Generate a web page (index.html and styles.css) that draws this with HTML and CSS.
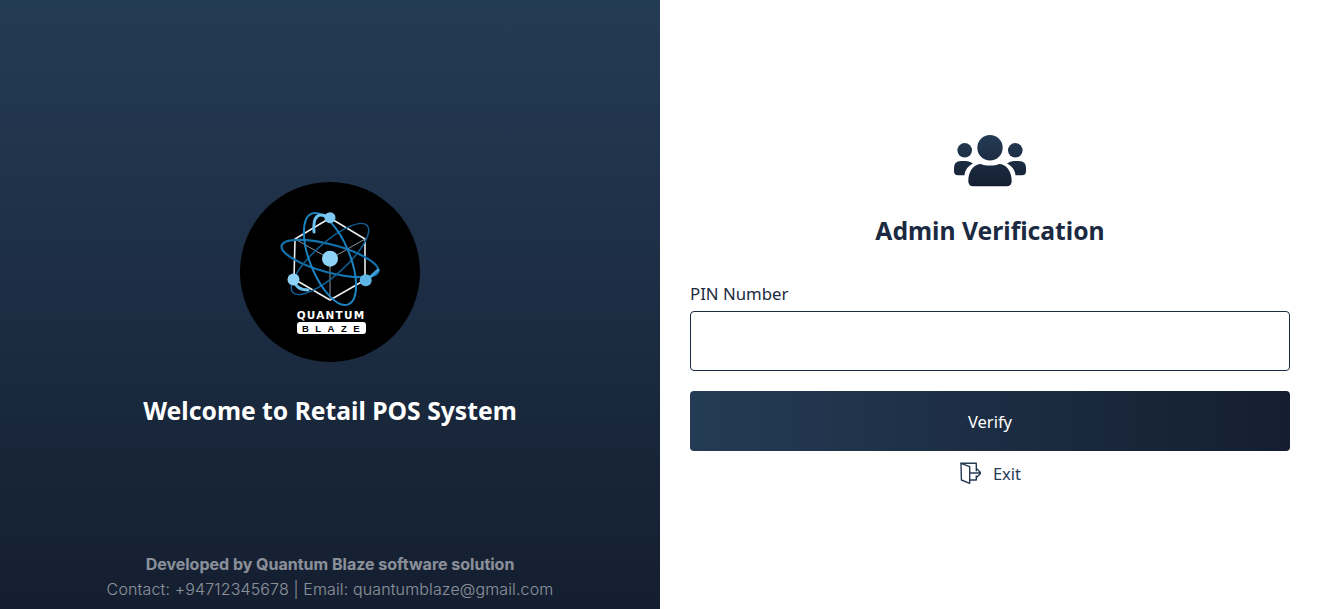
FILE: index.html
```html
<!DOCTYPE html>
<html lang="en">
<head>
  <meta charset="UTF-8">
  <meta name="viewport" content="width=device-width, initial-scale=1.0">
  <title>Admin Verification</title>
  <link rel="stylesheet" href="styles.css">
</head>
<body>
  <div class="page">
    <section class="brand">
      <div class="brand-spacer"></div>
      <div class="brand-main">
        <svg class="logo" width="180" height="180" viewBox="0 0 180 180">
          <circle cx="90" cy="90" r="90" fill="#000"/>
          <g fill="none" stroke="#e8eef2" stroke-width="1.600">
            <path d="M90 36 L125 57 V98 L90 118 L54 97 L55 57 Z"/>
          </g>
          <g fill="none" stroke="#8a97a3" stroke-width="1">
            <path d="M90 77 L55 57 M90 77 L125 57 M90 77 V118"/>
          </g>
          <g fill="none" stroke-linecap="round">
            <ellipse cx="90" cy="76.500" rx="50" ry="14" transform="rotate(15 90 76.500)" stroke="#1273ad" stroke-width="2.200"/>
            <ellipse cx="90" cy="77" rx="50" ry="16" transform="rotate(-42 90 77)" stroke="#0f5f93" stroke-width="1.500"/>
            <ellipse cx="90" cy="77" rx="49" ry="20" transform="rotate(68 90 77)" stroke="#1a83c0" stroke-width="2"/>
            <path d="M54 98 Q56 108 68 108" stroke="#6cc1ee" stroke-width="3"/>
            <path d="M74 50 Q72 26 90 36" stroke="#6cc1ee" stroke-width="3"/>
            <path d="M126 98 Q132 94 138 88" stroke="#3d9fd6" stroke-width="3"/>
          </g>
          <circle cx="90" cy="76.700" r="8" fill="#8ed3f7"/>
          <circle cx="90" cy="35.700" r="5.500" fill="#7cc8f0"/>
          <circle cx="53.500" cy="97.500" r="6" fill="#8ed3f7"/>
          <circle cx="125.700" cy="98.300" r="6" fill="#5eb4e2"/>
          <text class="logo-word" x="91" y="136.500" text-anchor="middle">QUANTUM</text>
          <rect x="57" y="140" width="69" height="12" rx="3" fill="#fff"/>
          <text class="logo-sub" x="94" y="149.500" text-anchor="middle">BLAZE</text>
        </svg>
        <h1 class="brand-title">Welcome to Retail POS System</h1>
      </div>
      <footer class="brand-footer">
        <div class="dev-line">Developed by Quantum Blaze software solution</div>
        <div class="contact-line">Contact: +94712345678 | Email: quantumblaze@gmail.com</div>
      </footer>
    </section>

    <section class="verify">
      <div class="verify-box">
        <svg class="users-icon" width="72" height="52" viewBox="0 0 72 52">
          <defs>
            <linearGradient id="navy" gradientUnits="userSpaceOnUse" x1="0" y1="0" x2="0" y2="52">
              <stop offset="0" stop-color="#243b55"/>
              <stop offset="1" stop-color="#141e30"/>
            </linearGradient>
          </defs>
          <g fill="url(#navy)">
            <circle cx="36" cy="12.700" r="12.700"/>
            <circle cx="10.700" cy="15.300" r="7.300"/>
            <circle cx="61.300" cy="15.300" r="7.300"/>
            <path d="M14.300 46 C14.300 36 20 29 27 29 C31 31 41 31 45 29 C52 29 57.700 36 57.700 46 Q57.700 51.300 52.500 51.300 H19.500 Q14.300 51.300 14.300 46 Z"/>
            <path d="M0 33 Q0 26 7 26 H12 Q16 26 19 28.500 C14 31 11 35 10.500 40.300 H4 Q0 40.300 0 36 Z"/>
            <path d="M72 33 Q72 26 65 26 H60 Q56 26 53 28.500 C58 31 61 35 61.500 40.300 H68 Q72 40.300 72 36 Z"/>
          </g>
        </svg>
        <h2 class="verify-title">Admin Verification</h2>
        <label class="pin-label" for="pin-input">PIN Number</label>
        <input class="pin-input" id="pin-input" type="password">
        <button class="btn-verify" type="button">Verify</button>
        <a class="exit-link" href="#">
          <svg width="22" height="22" viewBox="0 0 22 22" fill="none" stroke="#243b55" stroke-width="1.400" stroke-linejoin="round" stroke-linecap="round">
            <path d="M2 1.300 H17.300 V8.700 M17.300 14 V18 H10.700"/>
            <path d="M2 1.300 L10.700 4.700 V21.300 L2.400 18 Z"/>
            <path d="M14 11 H25 M21 7 L25 11 L21 15" transform="translate(-3 0)"/>
          </svg>
          <span>Exit</span>
        </a>
      </div>
    </section>
  </div>
</body>
</html>
```

FILE: styles.css
```css
html, body {
  height: 100%;
}
body {
  margin: 0;
  font-family: "Noto Sans", sans-serif;
  color: #1b2a41;
}
.page {
  display: grid;
  grid-template-columns: 660px 660px;
  height: 609px;
  overflow: hidden;
}

/* left panel */
.brand {
  display: grid;
  grid-template-rows: 1fr auto 1fr;
  justify-items: center;
  background: linear-gradient(180deg, #243b55, #141e30);
}
.brand-main {
  display: flex;
  flex-direction: column;
  align-items: center;
}
.logo {
  display: block;
}
.logo-word {
  font-family: "DejaVu Sans", sans-serif;
  font-size: 10.500px;
  font-weight: 700;
  letter-spacing: 1.200px;
  fill: #fff;
}
.logo-sub {
  font-family: "Liberation Sans", sans-serif;
  font-size: 9.500px;
  font-weight: 700;
  letter-spacing: 6.500px;
  fill: #000;
}
.brand-title {
  margin: 32px 0 0;
  font-size: 24.700px;
  line-height: 34px;
  font-weight: 700;
  color: #fff;
}
.brand-footer {
  align-self: end;
  padding-bottom: 7px;
  text-align: center;
  font-family: Inter, sans-serif;
  font-size: 16px;
  line-height: 25px;
  color: #fff;
  opacity: 0.5;
}
.dev-line {
  font-weight: 700;
}
.contact-line {
  font-weight: 300;
  letter-spacing: 0.130px;
}

/* right panel */
.verify {
  display: flex;
  align-items: center;
  background: #fff;
  padding: 12px 30px 0;
}
.verify-box {
  display: flex;
  flex-direction: column;
  width: 600px;
}
.users-icon {
  display: block;
  align-self: center;
}
.verify-title {
  margin: 26px 0 0;
  text-align: center;
  font-size: 24.700px;
  line-height: 36px;
  font-weight: 700;
  color: #1b2a41;
}
.pin-label {
  margin-top: 33px;
  font-size: 16.800px;
  line-height: 24px;
}
.pin-input {
  box-sizing: border-box;
  height: 60px;
  margin-top: 5px;
  padding: 0 12px;
  border: 1px solid #1b2a41;
  border-radius: 4px;
  outline: none;
}
.btn-verify {
  height: 60px;
  margin-top: 20px;
  border: none;
  border-radius: 4px;
  background: linear-gradient(90deg, #243b55, #141e30);
  color: #fff;
  font-family: inherit;
  font-size: 16.500px;
  cursor: pointer;
}
.exit-link {
  display: flex;
  justify-content: center;
  align-items: center;
  gap: 12px;
  height: 24px;
  margin: 10px 0 1px;
  color: #243b55;
  font-size: 16.500px;
  text-decoration: none;
}
```
